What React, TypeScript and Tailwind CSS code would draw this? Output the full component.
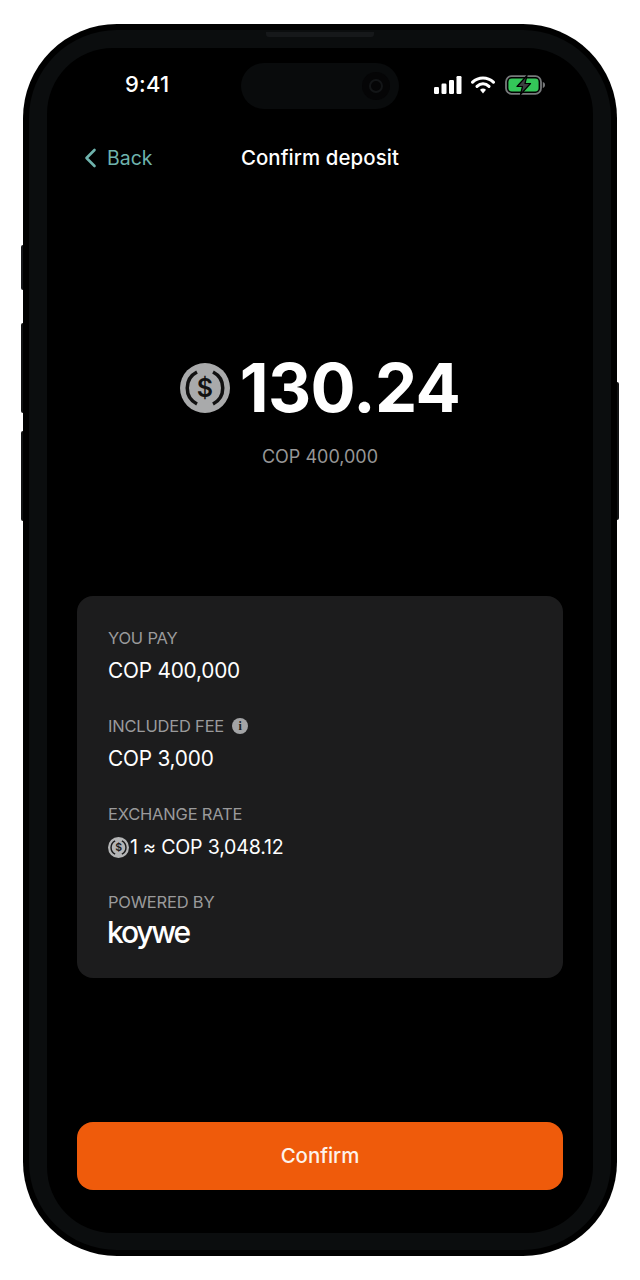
function UsdcIcon({ size, bg = '#a9aaab', fg = '#1c1d1e' }: { size: number; bg?: string; fg?: string }) {
  return (
    <svg width={size} height={size} viewBox="0 0 50 50" className="shrink-0">
      <circle cx="25" cy="25" r="25" fill={bg} />
      <path d="M17 9 A18 18 0 0 0 17 41" fill="none" stroke={fg} strokeWidth="3.5" />
      <path d="M33 9 A18 18 0 0 1 33 41" fill="none" stroke={fg} strokeWidth="3.5" />
      <text x="25" y="34" textAnchor="middle" fontSize="25" fontWeight="600" fill={fg} fontFamily="Inter, sans-serif">$</text>
    </svg>
  )
}

function StatusIcons() {
  return (
    <div className="flex items-center gap-[9px]">
      <svg width="28" height="18" viewBox="0 0 28 18">
        <rect x="0" y="11" width="5" height="7" rx="1.2" fill="#fff" />
        <rect x="7.5" y="7.5" width="5" height="10.5" rx="1.2" fill="#fff" />
        <rect x="15" y="4" width="5" height="14" rx="1.2" fill="#fff" />
        <rect x="22.5" y="0" width="5" height="18" rx="1.2" fill="#fff" />
      </svg>
      <svg width="24" height="18" viewBox="0 0 24 18" fill="none">
        <path d="M1.6 6.2 C7.5 0.6 16.5 0.6 22.4 6.2" stroke="#fff" strokeWidth="3.1" strokeLinecap="round" />
        <path d="M6 10.4 C9.6 7 14.4 7 18 10.4" stroke="#fff" strokeWidth="3.1" strokeLinecap="round" />
        <path d="M9 13.8 Q12 11.2 15 13.8 L12 17.6 Z" fill="#fff" />
      </svg>
      <svg width="41" height="20" viewBox="0 0 41 20" className="ml-[1px]">
        <rect x="1" y="1.2" width="35" height="17.6" rx="5.5" fill="none" stroke="#77797b" strokeWidth="1.8" />
        <rect x="3.4" y="3.6" width="30.2" height="12.8" rx="3.4" fill="#34c759" />
        <path d="M37.8 7 C39.4 7.4 40 8.6 40 10 C40 11.4 39.4 12.6 37.8 13 Z" fill="#77797b" />
        <path d="M22 0.5 L12 11.5 H17.5 L15.5 19.5 L25.5 8.5 H20 Z" fill="#3c3f40" stroke="#000" strokeWidth="1.2" strokeLinejoin="round" />
      </svg>
    </div>
  )
}

function DetailRow({ label, children }: { label: React.ReactNode; children: React.ReactNode }) {
  return (
    <div className="flex flex-col">
      <div className="flex items-center h-[20px] text-[16.5px] text-[#9a9a9b] tracking-[-0.2px]">{label}</div>
      <div className="flex items-center h-[24px] mt-[11px] text-[20.8px] text-white tracking-[-0.2px]">{children}</div>
    </div>
  )
}

export default function App() {
  return (
    <div className="w-[640px] h-[1280px] bg-white pt-[24px] px-[23px] font-['Inter',sans-serif]">
      <div className="relative h-[1232px] rounded-[94px] bg-black p-[6px]">
        {/* hardware buttons */}
        <div className="absolute left-[-2px] top-[221px] w-[2px] h-[45px] rounded-l-[2px] bg-[#16171a]" />
        <div className="absolute left-[-2px] top-[299px] w-[2px] h-[90px] rounded-l-[2px] bg-[#121314]" />
        <div className="absolute left-[-2px] top-[407px] w-[2px] h-[90px] rounded-l-[2px] bg-[#121314]" />
        <div className="absolute right-[-2px] top-[358px] w-[2px] h-[138px] rounded-r-[2px] bg-[#121314]" />
        <div className="h-full rounded-[88px] bg-[#0b0d0e] p-[18px_18px_17px_18px]">
          <div className="relative h-full rounded-[66px] bg-black flex flex-col px-[30px]">
            <div className="absolute left-[219px] top-[-16px] w-[108px] h-[5px] rounded-b-[3px] bg-[#16181a]" />

            {/* status bar */}
            <div className="relative flex items-center justify-between h-[46px] mt-[15px] pb-[3px] -mx-[30px] pl-[78px] pr-[47px]">
              <span className="text-[22px] font-medium text-white tracking-[0.2px]">9:41</span>
              <div className="absolute left-[194px] top-0 w-[158px] h-[46px] rounded-[23px] bg-[#090b0c] flex items-center justify-end pr-[9px]">
                <div className="w-[28px] h-[28px] rounded-full bg-[#050506] flex items-center justify-center">
                  <div className="w-[14px] h-[14px] rounded-full border-2 border-[#131517]" />
                </div>
              </div>
              <StatusIcons />
            </div>

            {/* nav */}
            <div className="relative flex items-center justify-center h-[24px] mt-[37px]">
              <div className="absolute left-[7px] flex items-center gap-[10px] text-[#6fb3ad]">
                <svg width="13" height="20" viewBox="0 0 13 20" fill="none">
                  <path d="M10.5 2 L2.5 10 L10.5 18" stroke="currentColor" strokeWidth="2.6" strokeLinecap="round" strokeLinejoin="round" />
                </svg>
                <span className="text-[19.5px] mt-[1px]">Back</span>
              </div>
              <span className="text-[20.4px] font-medium text-white tracking-[0.1px]">Confirm deposit</span>
            </div>

            {/* amount */}
            <div className="flex items-center justify-center gap-[10px] mt-[178px] h-[80px]">
              <UsdcIcon size={50} bg="#a9aaab" fg="#111" />
              <span className="text-[67px] leading-[80px] font-bold text-white tracking-[-0.6px]">130.24</span>
            </div>
            <div className="text-center text-[18px] leading-[24px] text-[#969696] mt-[17px]">COP 400,000</div>

            {/* details card */}
            <div className="mt-[127px] h-[382px] rounded-[16px] bg-[#1c1c1d] pl-[31px] pr-[30px] pt-[32px] flex flex-col gap-[33px]">
              <DetailRow label="YOU PAY">COP 400,000</DetailRow>
              <DetailRow
                label={
                  <>
                    INCLUDED FEE
                    <span className="ml-[8px] w-[16px] h-[16px] rounded-full bg-[#a3a4a6] flex items-center justify-center text-[12px] font-bold text-[#1c1c1d] font-['Liberation_Serif',serif]">
                      i
                    </span>
                  </>
                }
              >
                COP 3,000
              </DetailRow>
              <DetailRow label="EXCHANGE RATE">
                <UsdcIcon size={21} bg="#b4b5b6" fg="#1c1c1d" />
                <span className="ml-[1px] mt-[1px] text-[19.6px]">1 ≈ COP 3,048.12</span>
              </DetailRow>
              <div className="flex flex-col">
                <div className="flex items-center h-[20px] text-[16.5px] text-[#9a9a9b] tracking-[-0.2px]">POWERED BY</div>
                <div className="h-[30px] mt-[5px] -ml-[1px] text-[30px] leading-[30px] font-medium text-white tracking-[-2.2px]">koywe</div>
              </div>
            </div>

            {/* confirm */}
            <div className="mt-[144px] h-[68px] rounded-[16px] bg-[#ef5b0b] flex items-center justify-center text-[20.4px] font-medium text-[#fdf3ec]">
              Confirm
            </div>
          </div>
        </div>
      </div>
    </div>
  )
}
